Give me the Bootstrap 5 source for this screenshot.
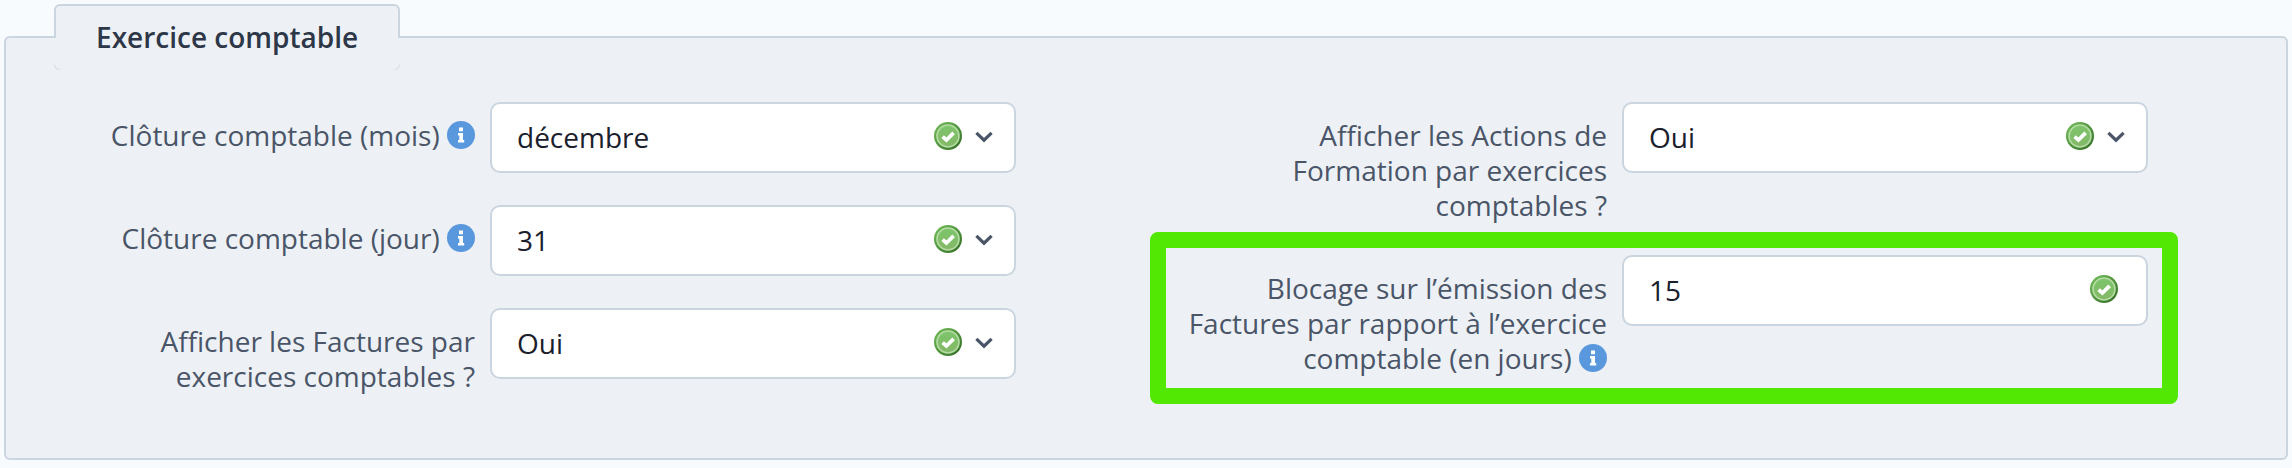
<!DOCTYPE html>
<html lang="fr">
<head>
<meta charset="utf-8">
<meta name="viewport" content="width=device-width, initial-scale=1">
<title>Exercice comptable</title>
<link href="https://cdn.jsdelivr.net/npm/bootstrap@5.3.0/dist/css/bootstrap.min.css" rel="stylesheet">
<style>
  :root {
    --panel: #edf1f6;
    --line: #cbd5e0;
    --valid: url("data:image/svg+xml,%3Csvg xmlns='http://www.w3.org/2000/svg' viewBox='0 0 28 28'%3E%3Cdefs%3E%3ClinearGradient id='a' x1='0' y1='0' x2='1' y2='1'%3E%3Cstop offset='0' stop-color='%2374c05a'/%3E%3Cstop offset='1' stop-color='%232f6b22'/%3E%3C/linearGradient%3E%3ClinearGradient id='b' x1='0' y1='0' x2='0' y2='1'%3E%3Cstop offset='0' stop-color='%237cc56b'/%3E%3Cstop offset='1' stop-color='%2384b866'/%3E%3C/linearGradient%3E%3C/defs%3E%3Ccircle cx='14' cy='14' r='14' fill='url(%23a)'/%3E%3Ccircle cx='14' cy='14' r='11' fill='url(%23b)' stroke='%23b5dba4' stroke-width='1.6'/%3E%3Cpath d='M8.6 14.6l3.8 3.4 7.2-7.2' fill='none' stroke='%23fff' stroke-width='3.8'/%3E%3C/svg%3E");
    --chevron: url("data:image/svg+xml,%3Csvg xmlns='http://www.w3.org/2000/svg' viewBox='0 0 20 14'%3E%3Cpath d='M2.4 2.8l7.6 7.4 7.6-7.4' fill='none' stroke='%234a5568' stroke-width='3.2'/%3E%3C/svg%3E");
  }
  body {
    background: #f8fbfd;
    color: #4a5568;
    font-family: "Open Sans", "Noto Sans", sans-serif;
    font-size: 28px;
    line-height: 35px;
  }
  .settings-panel {
    margin: 4px;
    padding: 32px 138px 64px 48px;
    border: 2px solid var(--line);
    border-radius: 6px;
    background: var(--panel);
  }
  .settings-panel > legend {
    float: none;
    position: relative;
    width: auto;
    margin: 0;
    padding: 12px 40px;
    border: 2px solid var(--line);
    border-radius: 6px;
    background: var(--panel);
    color: #2d3748;
    font-size: 28px;
    font-weight: 600;
    line-height: 38px;
  }
  /* hides the lower half of the tab outline so it opens into the panel */
  .settings-panel > legend::after {
    content: "";
    position: absolute;
    inset: 32px -2px -2px;
    border-radius: 0 0 8px 8px;
    background: var(--panel);
  }
  .settings-panel > legend span { position: relative; z-index: 1; }
  .settings-columns { --bs-gutter-x: 170px; }
  .field-list { display: grid; gap: 32px; }
  .field-row {
    position: relative;
    display: grid;
    grid-template-columns: 421px minmax(0, 1fr);
    column-gap: 15px;
    align-items: start;
  }
  .field-row > label { padding-top: 16px; text-align: right; }
  .info-icon { width: 28px; height: 28px; vertical-align: -3px; }
  .field-row > .field-box {
    height: 71px;
    padding: 0 100px 2px 25px;
    border: 2px solid var(--line);
    border-radius: 10px;
    background-color: #fff;
    background-image: var(--chevron), var(--valid);
    background-repeat: no-repeat;
    background-position: right 20px top 26px, right 52px top 18px;
    background-size: 20px 14px, 28px 28px;
    color: #1a202c;
    font-size: 28px;
    line-height: 38px;
  }
  .field-row > input.field-box {
    background-image: var(--valid);
    background-position: right 28px top 18px;
    background-size: 28px 28px;
  }
  .highlight-frame {
    position: absolute;
    inset: -23px -30px -28px -36px;
    border: 16px solid #52e803;
    border-radius: 8px;
    pointer-events: none;
  }
  @media (max-width: 1599px) {
    .settings-panel { padding-left: 32px; padding-right: 32px; }
    .settings-columns > * { width: 100%; }
  }
  @media (max-width: 899px) {
    .field-row { grid-template-columns: minmax(0, 1fr); row-gap: 8px; }
    .field-row > label { text-align: left; }
  }
</style>
</head>
<body>
<svg class="d-none" aria-hidden="true">
  <symbol id="info" viewBox="0 0 28 28">
    <circle cx="14" cy="14" r="14" fill="#5a98dd"/>
    <path fill="#fff" d="M12 6.5h4v3.8h-4zM11 12h5v7h1.2v2.4H11V19h1.3v-4.6H11z"/>
  </symbol>
</svg>
<main>
  <form>
    <fieldset class="settings-panel">
      <legend><span>Exercice comptable</span></legend>
      <div class="row row-cols-2 settings-columns">
        <div class="col">
          <div class="field-list">
            <div class="field-row">
              <label for="month">Clôture comptable (mois) <svg class="info-icon"><use href="#info"/></svg></label>
              <select id="month" class="form-select field-box"><option>décembre</option></select>
            </div>
            <div class="field-row">
              <label for="day">Clôture comptable (jour) <svg class="info-icon"><use href="#info"/></svg></label>
              <select id="day" class="form-select field-box"><option>31</option></select>
            </div>
            <div class="field-row">
              <label for="invoices">Afficher les Factures par exercices comptables&nbsp;?</label>
              <select id="invoices" class="form-select field-box"><option>Oui</option><option>Non</option></select>
            </div>
          </div>
        </div>
        <div class="col">
          <div class="field-list">
            <div class="field-row">
              <label for="actions">Afficher les Actions de Formation par exercices comptables&nbsp;?</label>
              <select id="actions" class="form-select field-box"><option>Oui</option><option>Non</option></select>
            </div>
            <div class="field-row">
              <label for="lock">Blocage sur l’émission des Factures par rapport à l’exercice comptable (en jours) <svg class="info-icon"><use href="#info"/></svg></label>
              <input id="lock" type="text" class="form-control field-box" value="15">
              <div class="highlight-frame"></div>
            </div>
          </div>
        </div>
      </div>
    </fieldset>
  </form>
</main>
<script src="https://cdn.jsdelivr.net/npm/bootstrap@5.3.0/dist/js/bootstrap.bundle.min.js"></script>
</body>
</html>
